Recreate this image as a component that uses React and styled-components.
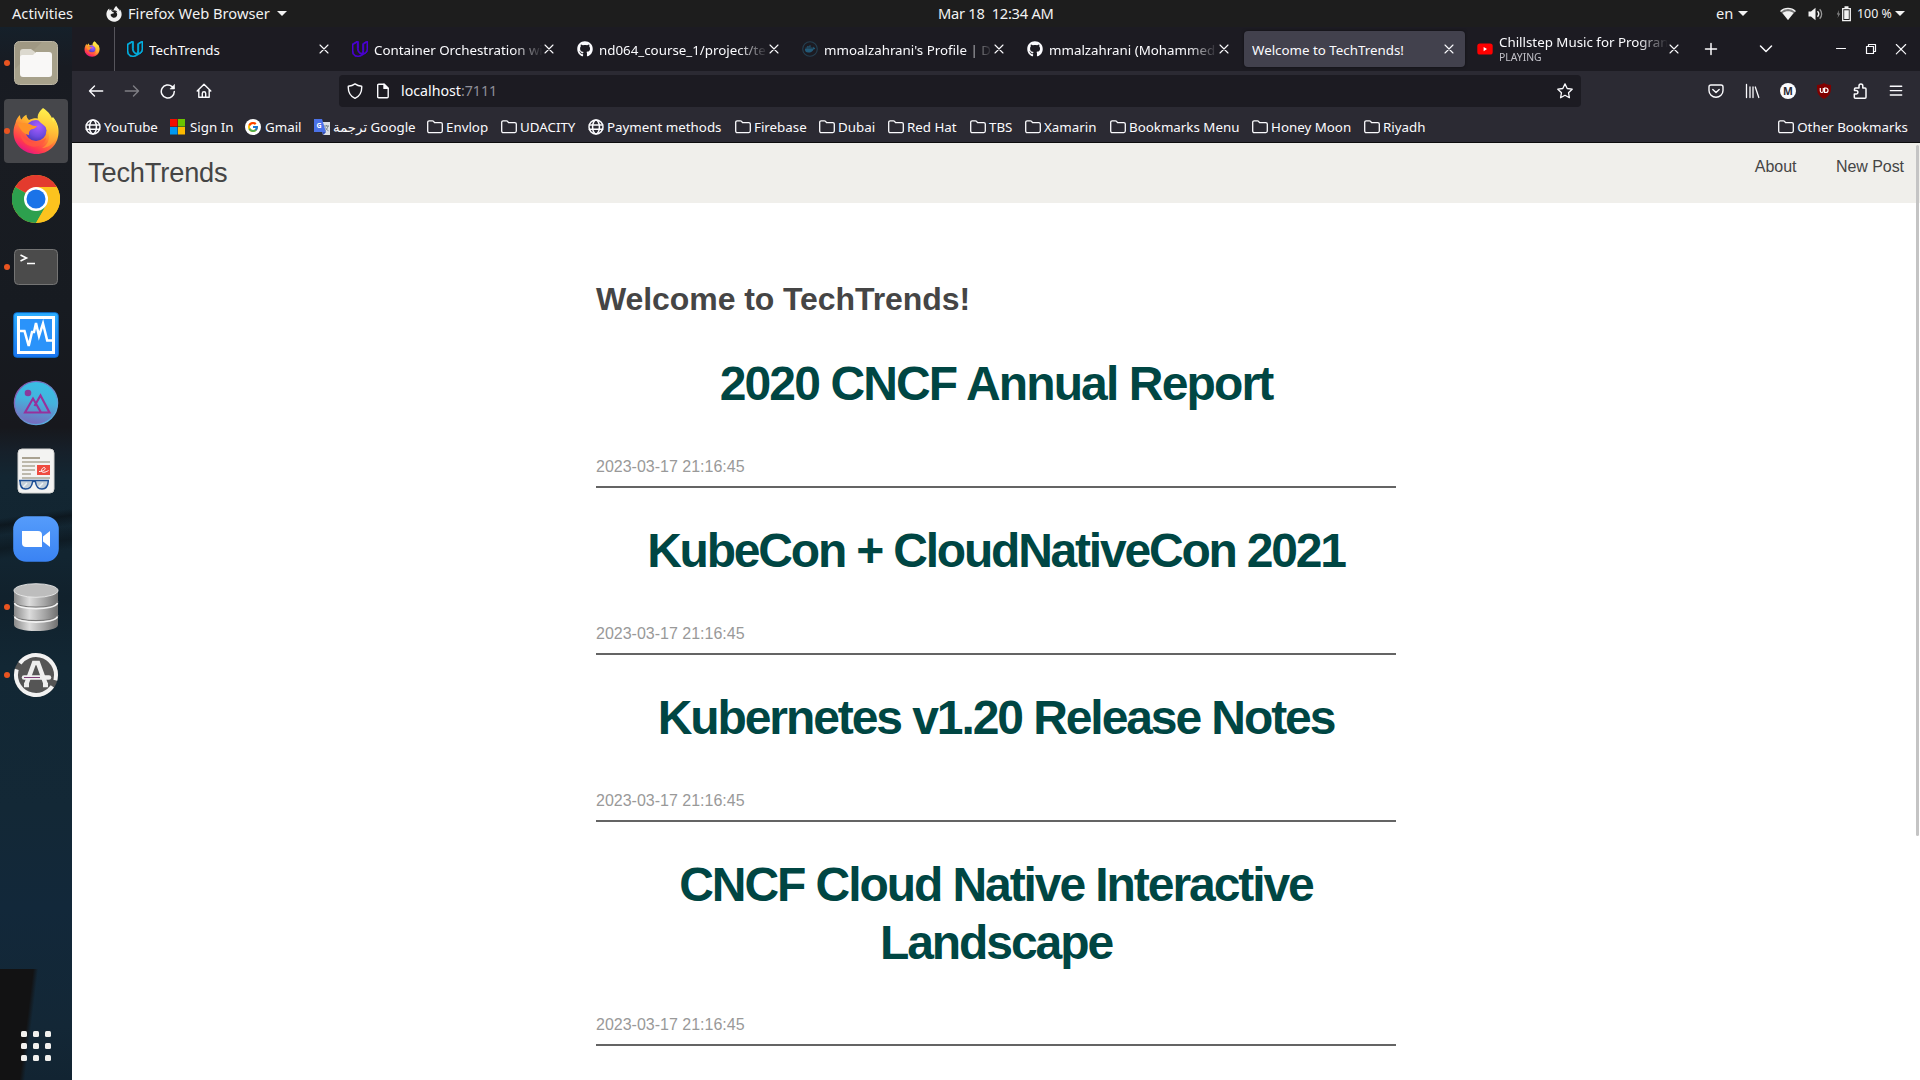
import React from "react";
import styled, { createGlobalStyle, css } from "styled-components";
import { FaDocker, FaFirefoxBrowser, FaGithub } from "react-icons/fa";
import { SiUdacity } from "react-icons/si";
import { FcGoogle } from "react-icons/fc";

const GlobalStyle = createGlobalStyle`
  * { box-sizing: border-box; }
  body { margin: 0; background: #fff; overflow: hidden; }
  h1, h2, p { margin: 0; font-weight: inherit; }
  svg { display: block; flex: none; }
`;

const uiFont = `"Noto Sans", "DejaVu Sans", sans-serif`;
const pageFont = `"Liberation Sans", Helvetica, Arial, sans-serif`;

/* ---------- desktop shell ---------- */

const Desktop = styled.div`
  width: 1920px;
  height: 1080px;
  display: flex;
  flex-direction: column;
  overflow: hidden;
  font-family: ${uiFont};
`;

const TopBar = styled.header`
  height: 27px;
  flex: none;
  display: grid;
  grid-template-columns: 938px 1fr auto;
  align-items: center;
  padding-right: 15px;
  background: #1d1d1d;
  color: #f2f2f2;
  font-size: 14.67px;
  line-height: 27px;
  white-space: pre;
`;

const BarGroup = styled.div`
  display: flex;
  align-items: center;
  padding-left: ${(p) => p.$start || 0}px;
`;

const BarItem = styled.span`
  display: flex;
  align-items: center;
  width: ${(p) => (p.$w ? `${p.$w}px` : "auto")};
  font-size: ${(p) => p.$size || 14.67}px;
`;

const Clock = styled.time`
  letter-spacing: -0.26px;
`;

const Caret = styled.i`
  width: 10px;
  height: 5px;
  background: #f2f2f2;
  clip-path: polygon(0 0, 100% 0, 50% 100%);
`;

const Work = styled.div`
  flex: 1;
  display: flex;
  min-height: 0;
`;

const Dock = styled.nav`
  width: 72px;
  flex: none;
  display: flex;
  flex-direction: column;
  align-items: center;
  gap: 4px;
  padding: 4px 0 2px;
  background:
    linear-gradient(97deg, #121213 0 33px, transparent 38px) 0 942px / 45px 111px no-repeat,
    linear-gradient(172deg, transparent 0 42%, rgba(8, 12, 16, 0.55) 46%, transparent 52%, rgba(8, 12, 16, 0.4) 60%, transparent 66%) 0 420px / 72px 160px no-repeat,
    linear-gradient(#15202a 0, #181b22 40px, #191c22 120px, #171b21 280px, #17181d 400px, #16202a 425px, #132632 450px, #122531 530px, #11212c 570px, #122734 640px, #132836 780px, #12283a 880px, #132736 1000px, #122432 1053px);
`;

const DockItem = styled.button`
  position: relative;
  width: 64px;
  height: 64px;
  flex: none;
  display: grid;
  place-items: center;
  padding: 0;
  border: 0;
  border-radius: 4px;
  background: ${(p) => (p.$active ? "#46474b" : "transparent")};
  ${(p) =>
    p.$running &&
    css`
      &::before {
        content: "";
        position: absolute;
        left: 0;
        top: 29px;
        width: 6px;
        height: 6px;
        border-radius: 50%;
        background: #e95420;
      }
    `}
`;

const AppGrid = styled.button`
  display: grid;
  grid-template-columns: repeat(3, 6px);
  gap: 6px;
  margin: auto 0 17px;
  padding: 0;
  border: 0;
  background: none;
`;

const GridDot = styled.i`
  width: 6px;
  height: 6px;
  border-radius: 1.5px;
  background: #f1f0ee;
`;

/* ---------- browser ---------- */

const Browser = styled.main`
  flex: 1;
  min-width: 0;
  display: flex;
  flex-direction: column;
`;

const TabStrip = styled.div`
  height: 44px;
  flex: none;
  display: flex;
  background: #1c1b22;
  color: #fbfbfe;
`;

const PinnedTab = styled.div`
  width: 43px;
  display: flex;
  align-items: center;
  padding: 0 0 0 12px;
  border-right: 1px solid #56555c;
`;

const Tabs = styled.div`
  display: flex;
  gap: 4px;
  padding: 4px 0 0 4px;
`;

const Tab = styled.div`
  width: 221px;
  height: 36px;
  display: flex;
  align-items: center;
  gap: 6px;
  padding: 0 8px;
  border-radius: 4px;
  background: ${(p) => (p.$active ? "#42414d" : "transparent")};
  box-shadow: ${(p) => (p.$active ? "0 0 3px rgba(0,0,0,.5)" : "none")};
`;

const TabText = styled.div`
  flex: 1;
  min-width: 0;
  overflow: hidden;
  white-space: nowrap;
  font-size: 13.33px;
  line-height: 18px;
  padding-top: ${(p) => (p.$double ? 0 : 2)}px;
  margin-top: ${(p) => (p.$double ? -2 : 0)}px;
  margin-right: -8px;
  ${(p) =>
    p.$fade &&
    css`
      mask-image: linear-gradient(to left, transparent 0, black 30px);
    `}
`;

const TabStatus = styled.small`
  display: block;
  padding-top: 1px;
  font-size: 10.4px;
  line-height: 11px;
  color: #c2c1c8;
`;

const StripButton = styled.div`
  width: ${(p) => p.$w}px;
  display: grid;
  place-items: center;
`;

const WindowButtons = styled.div`
  margin-left: auto;
  display: flex;
  padding-right: 4px;
`;

const NavBar = styled.div`
  height: 40px;
  flex: none;
  display: flex;
  align-items: center;
  padding: 0 6px;
  background: #2b2a33;
  color: #fbfbfe;
`;

const ToolButton = styled.div`
  width: 36px;
  height: 36px;
  display: grid;
  place-items: center;
  opacity: ${(p) => (p.$off ? 0.4 : 1)};
`;

const UrlBar = styled.div`
  width: 1242px;
  height: 32px;
  margin-left: 117px;
  display: flex;
  align-items: center;
  gap: 12px;
  padding: 0 8px;
  border-radius: 4px;
  background: #1c1b22;
`;

const UrlText = styled.span`
  flex: 1;
  margin-left: -2px;
  font-size: 14.2px;
  line-height: 20px;
`;

const Dim = styled.span`
  color: #8f8f98;
`;

const Tools = styled.div`
  display: flex;
  margin-left: auto;
`;

const Bookmarks = styled.div`
  height: 32px;
  flex: none;
  display: flex;
  align-items: center;
  padding: 1px 12px 0 13px;
  background: #2b2a33;
  border-bottom: 1px solid #0c0c0d;
  color: #fbfbfe;
  font-size: 13.33px;
`;

const Bookmark = styled.div`
  width: ${(p) => (p.$w ? `${p.$w}px` : "auto")};
  margin-left: ${(p) => (p.$last ? "auto" : 0)};
  display: flex;
  align-items: center;
  gap: ${(p) => p.$gap || 3}px;
  white-space: nowrap;
`;

/* ---------- web page ---------- */

const Page = styled.div`
  position: relative;
  flex: 1;
  min-height: 0;
  overflow: hidden;
  background: #fff;
  color: #454545;
  font-family: ${pageFont};
`;

const ScrollThumb = styled.div`
  position: absolute;
  right: 1px;
  top: 2px;
  width: 3px;
  height: 691px;
  border-radius: 2px;
  background: #c4c4c4;
`;

const SiteHeader = styled.div`
  height: 60px;
  display: flex;
  justify-content: space-between;
  padding: 0 16px;
  background: #f0efeb;
`;

const Brand = styled.div`
  font-size: 27.2px;
  line-height: 59px;
  letter-spacing: -0.15px;
`;

const SiteNav = styled.div`
  display: flex;
  gap: 39.5px;
  font-size: 16px;
  line-height: 47px;
  letter-spacing: -0.05px;
`;

const Content = styled.section`
  width: 800px;
  margin: 0 auto;
  padding-top: 76px;
`;

const Welcome = styled.h2`
  margin-bottom: 1.1px;
  font-size: 32px;
  line-height: 41px;
  font-weight: 700;
  letter-spacing: -0.08px;
`;

const Post = styled.article`
  padding: 34.4px 0 6.3px;
  border-bottom: 2px solid #646464;
`;

const PostTitle = styled.h1`
  font-size: 48px;
  line-height: 57.6px;
  font-weight: 700;
  letter-spacing: ${(p) => p.$tracking}px;
  text-align: center;
  color: #004643;
`;

const PostDate = styled.p`
  margin-top: 41px;
  font-size: 16px;
  line-height: 25.6px;
  color: #999;
`;

/* ---------- icons ---------- */

const Line = ({ size = 16, w = 1.3, children }) => (
  <svg width={size} height={size} viewBox="0 0 16 16" fill="none" stroke="currentColor" strokeWidth={w} strokeLinecap="round" strokeLinejoin="round">
    {children}
  </svg>
);

const Cross = () => <Line w={1.1}><path d="M4 4l8 8M12 4l-8 8" /></Line>;
const Folder = () => <Line><path d="M.7 3.300c0-.9.6-1.500 1.500-1.500h3.200c.5 0 .9.2 1.200.6l.9 1.200h6.300c.9 0 1.500.6 1.500 1.500v7c0 .9-.6 1.500-1.500 1.500H2.200c-.9 0-1.500-.6-1.500-1.500z" /></Line>;
const Globe = () => <Line w={1.5}><circle cx="8" cy="8" r="7" /><ellipse cx="8" cy="8" rx="3.4" ry="7" /><path d="M1.300 6h13.400M1.300 10.300h13.400" /></Line>;
const Udacity = ({ color }) => <SiUdacity size={16} color={color} stroke={color} strokeWidth="1.2" />;

const Firefox = ({ size, id }) => (
  <svg width={size} height={size} viewBox="0 0 48 48">
    <defs>
      <linearGradient id={`${id}a`} x1=".8" y1=".1" x2=".25" y2=".95">
        <stop offset="0" stopColor="#fff44f" /><stop offset=".3" stopColor="#ffb52e" /><stop offset=".55" stopColor="#ff7139" /><stop offset=".8" stopColor="#ff3750" /><stop offset="1" stopColor="#e31587" />
      </linearGradient>
      <radialGradient id={`${id}b`} cx=".6" cy=".3" r=".8">
        <stop offset="0" stopColor="#a95dff" /><stop offset=".6" stopColor="#6f4be0" /><stop offset="1" stopColor="#4434b0" />
      </radialGradient>
      <linearGradient id={`${id}c`} x1=".6" y1="0" x2=".5" y2="1">
        <stop offset="0" stopColor="#fff44f" /><stop offset=".5" stopColor="#ffc938" /><stop offset="1" stopColor="#ff8a33" />
      </linearGradient>
    </defs>
    <path fill={`url(#${id}a)`} d="M3.500 16c.5-3 2-6 4.500-8 0 2 .5 3.500 1.500 4.500C11 10 12.500 8.500 14.500 7.800c0 2 .8 3.700 2.500 5.200C21 11 25 11 28 12l9 1c2-.5 3-2 4-3 4 5 6 10 5.500 16C46 38 36.500 47 24.500 47S1.500 38 1.500 25.500c0-3.500.7-6.500 2-9.500z" />
    <circle cx="24" cy="23.500" r="10.500" fill={`url(#${id}b)`} />
    <path fill={`url(#${id}c)`} d="M31 1c6 4 9.500 9 10 14 .7-1 1-2 1-3.500C46 18 46.500 25 44 31c-2.500 6-7.500 9.500-14 10 6-3 8-9 6.500-15-1-5-4-7.500-7.500-10-4.500-3.500-5-9 2-15z" />
    <path fill="#ff9328" d="M6 17c5-1.800 11-1.300 14.500 1.500 1.500.4 3 .5 4.500.5-1 2-3 3-5.500 3.300-2 1.200-3 3-2.500 5.700-5-1-9-5-11-11z" />
    <path fill="#ff5a3f" opacity=".75" d="M8 23c2 9 9 14 17 12 4-1 6-2 9-4-1 6-7 9.500-14 8.500C13 38.500 7.500 32 8 23z" />
  </svg>
);

const Files = () => (
  <svg width="48" height="48" viewBox="0 0 48 48">
    <rect x="2.500" y="2.500" width="43" height="43" rx="5" fill="#9f9883" stroke="#bdb7a6" />
    <path d="M3 45V30L30 3h12q3 0 3 3v36q0 3-3 3z" fill="#b0a994" opacity=".5" />
    <path d="M8 23V13q0-3 3-3h8l4 3v8z" fill="#dcd9cf" />
    <path d="M8 18.500q0-2.500 2.500-2.500H21l3-3h13q3 0 3 3v19q0 3-3 3H11q-3 0-3-3z" fill="#f9f8f7" />
  </svg>
);

const Chrome = () => (
  <svg width="48" height="48" viewBox="0 0 48 48">
    <circle cx="24" cy="24" r="24" fill="#fcc31e" />
    <path d="M24 24L3.200 12A24 24 0 0 1 44.800 12z" fill="#e33b2e" />
    <path d="M24 24L3.200 12A24 24 0 0 0 24 48l10.400-18z" fill="#2da04e" />
    <path d="M24 12h20.800A24 24 0 0 1 24 48l10.400-18z" fill="#fcc31e" />
    <circle cx="24" cy="24" r="12" fill="#fff" />
    <circle cx="24" cy="24" r="9.500" fill="#1a73e8" />
  </svg>
);

const Terminal = () => (
  <svg width="48" height="48" viewBox="0 0 48 48">
    <rect x="2.500" y="6.500" width="43" height="35" rx="4" fill="#4b4b4b" stroke="#747474" />
    <path d="M8.500 12l6 3-6 3M15 20.500h8" stroke="#fff" strokeWidth="1.600" fill="none" />
  </svg>
);

const Monitor = () => (
  <svg width="48" height="48" viewBox="0 0 48 48">
    <defs><linearGradient id="mon" x1="0" y1="0" x2="0" y2="1"><stop offset="0" stopColor="#2eb0ff" /><stop offset="1" stopColor="#1a74f0" /></linearGradient></defs>
    <rect x="1.700" y="1.700" width="44.600" height="44.600" rx="3" fill="url(#mon)" stroke="#0c6fd0" />
    <rect x="6.500" y="6.500" width="35" height="35" fill="#2a93fa" stroke="#fff" strokeWidth="3" />
    <path d="M8 20h4.500l4.200 15L20 21h2l2-9 3 13 4-12.500 4.200 17H41" stroke="#fff" strokeWidth="2.500" fill="none" />
  </svg>
);

const Mountains = () => (
  <svg width="48" height="48" viewBox="0 0 48 48">
    <defs>
      <linearGradient id="mtn" x1=".6" y1="0" x2=".4" y2="1"><stop offset="0" stopColor="#38bfe6" /><stop offset=".45" stopColor="#45b2dc" /><stop offset="1" stopColor="#7a68bd" /></linearGradient>
      <linearGradient id="mtr" x1="0" y1="0" x2="1" y2="1"><stop offset="0" stopColor="#8d4aa8" /><stop offset="1" stopColor="#4ec0e8" /></linearGradient>
    </defs>
    <circle cx="24" cy="24" r="21.600" fill="url(#mtn)" stroke="url(#mtr)" strokeWidth="1.300" />
    <circle cx="16" cy="14" r="3.300" fill="#8a3b9c" />
    <path d="M13 33.500l8-14 8 14zM22.500 27l6-10.500 9 17H29" fill="none" stroke="#97309c" strokeWidth="2.100" />
  </svg>
);

const Reader = () => (
  <svg width="48" height="48" viewBox="0 0 48 48">
    <rect x="6" y="2" width="36" height="44" rx="4" fill="#f3f3f2" stroke="#d5d5d3" />
    <path d="M10 11h18" stroke="#a9a292" strokeWidth="2" />
    <path d="M10 15h28M10 19h13M10 23h13M10 27h9M10 31h28" stroke="#bdb9ac" strokeWidth="1.800" />
    <rect x="25" y="18" width="13" height="10" fill="#ef4b3f" />
    <path d="M27 24.500c4 0 7-2 6-3.500s-4 1-3.500 3 4 1.500 7-.5" stroke="#fff" fill="none" />
    <path d="M7 33.500h30M8 34c0 5 1 8 5.500 8S20 39 20.500 35c1-1 2-1 3 0 .5 4 2 7 6.500 7s6-3 6.300-8" fill="#c3ced8" stroke="#1d4f96" strokeWidth="1.500" />
    <path d="M11 40l4-4M27 40l4-4" stroke="#eef3f6" strokeWidth="1.500" />
  </svg>
);

const Zoom = () => (
  <svg width="48" height="48" viewBox="0 0 48 48">
    <defs><linearGradient id="zm" x1="0" y1="0" x2="0" y2="1"><stop offset="0" stopColor="#559cfb" /><stop offset="1" stopColor="#3a83f3" /></linearGradient></defs>
    <rect x="1.200" y="1.200" width="45.600" height="45.600" rx="13" fill="url(#zm)" />
    <path d="M10 16h16q4 0 4 4v12H14q-4 0-4-4z" fill="#fff" />
    <path d="M31 21.500l7-5.500v16l-7-5.500z" fill="#fff" />
  </svg>
);

const Database = () => (
  <svg width="48" height="50" viewBox="0 0 48 50">
    <defs>
      <linearGradient id="db" x1="0" x2="1"><stop offset="0" stopColor="#8a8a8a" /><stop offset=".35" stopColor="#dcdcdc" /><stop offset=".7" stopColor="#a4a4a4" /><stop offset="1" stopColor="#707070" /></linearGradient>
    </defs>
    <path d="M2 8v35c1 8 43 8 44 0V8z" fill="url(#db)" />
    {[20, 33.5].map((y) => (
      <g key={y} fill="none" transform={`translate(0 ${y})`}>
        <path d="M2-.5c1 7.500 43 7.500 44 0" stroke="#777" strokeWidth="1.200" />
        <path d="M2.500 1c2 7.500 41 7.500 43 0" stroke="#f2f2f2" strokeWidth="1.600" />
      </g>
    ))}
    <ellipse cx="24" cy="8.500" rx="22" ry="6.800" fill="#bdbdbd" stroke="#e9e9e9" strokeWidth=".9" />
  </svg>
);

const Updater = () => (
  <svg width="48" height="48" viewBox="0 0 48 48">
    <circle cx="24" cy="24" r="22" fill="#555" />
    <circle cx="24" cy="24" r="20" fill="none" stroke="#f2f2f2" strokeWidth="4" strokeDasharray="56 6.800" strokeDashoffset="-8" transform="rotate(12 24 24)" />
    <path d="M14 34l8-22h4l8 22M12 34h5M31 34h5" fill="none" stroke="#eee" strokeWidth="4.500" />
    <path d="M12 26.500h25" stroke="#eee" strokeWidth="4.500" strokeLinecap="round" />
    <path d="M12 26.500h16" stroke="#7e3d77" strokeWidth="1" />
  </svg>
);

const MicrosoftMark = () => (
  <svg width="16" height="16" viewBox="0 0 16 16">
    <path fill="#f10e00" d="M0 0h7.500v7.500H0z" /><path fill="#6bc200" d="M8 0h7v7.500H8z" />
    <path fill="#0098f0" d="M0 8h7.500v7.500H0z" /><path fill="#fcb900" d="M8 8h7v7.500H8z" />
  </svg>
);

const GoogleMark = () => (
  <svg width="16" height="16" viewBox="0 0 16 16">
    <circle cx="8" cy="8" r="8" fill="#fff" />
    <FcGoogle x="2" y="2" size={12} />
  </svg>
);

const GlyphText = styled.text`
  font-family: ${uiFont};
  font-size: ${(p) => p.$size}px;
  font-weight: 700;
  text-anchor: middle;
`;

const TranslateMark = () => (
  <svg width="16" height="16" viewBox="0 0 16 16">
    <path fill="#dcdfe3" d="M6 3h10v13H9z" />
    <path fill="#4b72e8" d="M0 0h8l4 13H0z" />
    <path fill="#3450b8" d="M8 13h4l-2.500 3z" />
    <GlyphText x="5" y="8.800" fill="#fff" $size={7}>G</GlyphText>
    <path d="M10 7h5M12.500 6v1M14 7c-.4 2-1.500 3.500-2.700 4.500M11.500 8.500c.5 1.500 1.500 2.500 3 3.300" stroke="#76838c" fill="none" />
  </svg>
);

const YouTubeMark = () => (
  <svg width="16" height="16" viewBox="0 0 16 16">
    <rect x=".3" y="2.500" width="15.400" height="11" rx="2.600" fill="#f00" />
    <path d="M6.600 6v4.200L10 8.100z" fill="#fff" />
  </svg>
);

const DockerMark = () => (
  <svg width="16" height="16" viewBox="0 0 16 16">
    <circle cx="8" cy="8" r="7.300" fill="none" stroke="#243f50" strokeWidth="1.100" />
    <FaDocker x="2.800" y="2.600" size={10.5} color="#225a78" />
  </svg>
);

const Wifi = () => (
  <svg width="16" height="14" viewBox="0 0 16 14">
    <path d="M.7 4.600C4.800.3 11.200.3 15.300 4.600L8 13z" fill="#777" />
    <path d="M2.500 6C5.500 3.600 10.500 3.600 13.500 6L8 13z" fill="#f2f2f2" />
    <path d="M.5 4.500C4.800.4 11.200.4 15.500 4.500" fill="none" stroke="#f2f2f2" strokeWidth="1.300" />
  </svg>
);

const Volume = () => (
  <svg width="16" height="14" viewBox="0 0 16 14">
    <path d="M.5 4.500H3L7.500.8v12.400L3 9.500H.5z" fill="#f2f2f2" />
    <path d="M9.500 4.300c1.400 1.500 1.400 3.900 0 5.400" fill="none" stroke="#f2f2f2" strokeWidth="1.400" />
    <path d="M11.700 2.300c2.600 2.600 2.600 6.800 0 9.400" fill="none" stroke="#999" strokeWidth="1.300" />
  </svg>
);

const Battery = () => (
  <svg width="16" height="16" viewBox="0 0 16 16">
    <path d="M3 4L.8 8.500h1.600L1.500 12 4.300 7.500H2.600z" fill="#8a8a8a" />
    <path d="M6.700 2.600h7.600v12H6.700z" fill="none" stroke="#f2f2f2" strokeWidth="1.300" />
    <path d="M8.500.3h4v2h-4zM8.200 4.200h4.600V13H8.200z" fill="#f2f2f2" />
  </svg>
);

const UBlock = () => (
  <svg width="16" height="16" viewBox="0 0 16 16">
    <path d="M8 0c2.500 1.500 4.600 1.900 7 1.900 0 6.600.2 10-7 14.100C.8 11.900 1 8.500 1 1.900 3.400 1.900 5.500 1.500 8 0z" fill="#800000" />
    <path d="M4.300 5v3a1.500 1.500 0 0 0 3 0V5M8.600 5v4.500h1.200a2.200 2.200 0 0 0 0-4.500z" fill="none" stroke="#fff" strokeWidth="1.200" />
  </svg>
);

const Account = () => (
  <svg width="16" height="16" viewBox="0 0 16 16">
    <circle cx="8" cy="8" r="8" fill="#fbfbfe" />
    <GlyphText x="8" y="11.700" fill="#2b2a33" $size={10.5}>M</GlyphText>
  </svg>
);

/* ---------- data ---------- */

const dockApps = [
  { icon: <Files />, running: true },
  { icon: <Firefox size={48} id="dock" />, running: true, active: true },
  { icon: <Chrome /> },
  { icon: <Terminal />, running: true },
  { icon: <Monitor /> },
  { icon: <Mountains /> },
  { icon: <Reader /> },
  { icon: <Zoom /> },
  { icon: <Database />, running: true },
  { icon: <Updater />, running: true },
];

const tabs = [
  { icon: <Udacity color="#02b3e4" />, title: "TechTrends" },
  { icon: <Udacity color="#4b00d8" />, title: "Container Orchestration wi", fade: true },
  { icon: <FaGithub size={16} />, title: "nd064_course_1/project/te", fade: true },
  { icon: <DockerMark />, title: "mmoalzahrani's Profile | D", fade: true },
  { icon: <FaGithub size={16} />, title: "mmalzahrani (Mohammed", fade: true },
  { title: "Welcome to TechTrends!", active: true },
  { icon: <YouTubeMark />, title: "Chillstep Music for Progran", status: "PLAYING", fade: true },
];

const bookmarks = [
  { icon: <Globe />, label: "YouTube", w: 85 },
  { icon: <MicrosoftMark />, label: "Sign In", w: 75, gap: 4 },
  { icon: <GoogleMark />, label: "Gmail", w: 69, gap: 4 },
  { icon: <TranslateMark />, label: "ترجمة Google", w: 113 },
  { label: "Envlop", w: 74 },
  { label: "UDACITY", w: 87 },
  { icon: <Globe />, label: "Payment methods", w: 147 },
  { label: "Firebase", w: 84 },
  { label: "Dubai", w: 69 },
  { label: "Red Hat", w: 82 },
  { label: "TBS", w: 55 },
  { label: "Xamarin", w: 85 },
  { label: "Bookmarks Menu", w: 142 },
  { label: "Honey Moon", w: 112 },
  { label: "Riyadh" },
  { label: "Other Bookmarks", last: true },
];

const posts = [
  { title: "2020 CNCF Annual Report", tracking: -1.87 },
  { title: "KubeCon + CloudNativeCon 2021", tracking: -2.2 },
  { title: "Kubernetes v1.20 Release Notes", tracking: -2.08 },
  { title: "CNCF Cloud Native Interactive Landscape", tracking: -2.07 },
];

export default function App() {
  return (
    <Desktop>
      <GlobalStyle />
      <TopBar>
        <BarGroup $start={12}>
          <BarItem $w={94}>Activities</BarItem>
          <BarItem $w={22}><FaFirefoxBrowser size={16} /></BarItem>
          <BarItem $w={149}>Firefox Web Browser</BarItem>
          <Caret />
        </BarGroup>
        <BarGroup><Clock>Mar 18  12:34 AM</Clock></BarGroup>
        <BarGroup>
          <BarItem $w={22}>en</BarItem>
          <BarItem $w={42}><Caret /></BarItem>
          <BarItem $w={28}><Wifi /></BarItem>
          <BarItem $w={28}><Volume /></BarItem>
          <BarItem $w={21}><Battery /></BarItem>
          <BarItem $w={38} $size={12.4}>100 %</BarItem>
          <Caret />
        </BarGroup>
      </TopBar>
      <Work>
        <Dock>
          {dockApps.map((a, i) => (
            <DockItem key={i} $running={a.running} $active={a.active}>{a.icon}</DockItem>
          ))}
          <AppGrid>
            {Array.from({ length: 9 }, (_, i) => <GridDot key={i} />)}
          </AppGrid>
        </Dock>
        <Browser>
          <TabStrip>
            <PinnedTab><Firefox size={16} id="pin" /></PinnedTab>
            <Tabs>
              {tabs.map((t) => (
                <Tab key={t.title} $active={t.active}>
                  {t.icon}
                  <TabText $fade={t.fade} $double={t.status}>
                    {t.title}
                    {t.status && <TabStatus>{t.status}</TabStatus>}
                  </TabText>
                  <Cross />
                </Tab>
              ))}
            </Tabs>
            <StripButton $w={42}><Line w={1.5}><path d="M8 2.500v11M2.500 8h11" /></Line></StripButton>
            <StripButton $w={67}><Line w={1.5}><path d="M2.500 5L8 10.500 13.500 5" /></Line></StripButton>
            <WindowButtons>
              <StripButton $w={30}><Line w={1.1}><path d="M3.500 7.500h9" /></Line></StripButton>
              <StripButton $w={30}><Line w={1.2}><path d="M3.500 5.500h7v7h-7zM5.500 5V3.500h7v7H11" /></Line></StripButton>
              <StripButton $w={30}><Line w={1.1}><path d="M3.300 3.500l9.400 9.400M12.700 3.500l-9.400 9.400" /></Line></StripButton>
            </WindowButtons>
          </TabStrip>
          <NavBar>
            <ToolButton><Line w={1.4}><path d="M14.700 8H1.500M6.500 3l-5 5 5 5" /></Line></ToolButton>
            <ToolButton $off><Line w={1.4}><path d="M1.300 8h13.200M9.500 3l5 5-5 5" /></Line></ToolButton>
            <ToolButton><Line w={1.5}><path d="M14.300 8.500a6.500 6.500 0 1 1-2.200-4.900l1.400 1.300" /><path d="M14.500 1.800v4.200h-4.200z" fill="currentColor" strokeWidth=".6" /></Line></ToolButton>
            <ToolButton><Line w={1.4}><path d="M1.200 8L8 1.200 14.800 8M2.800 6.800v7.400h10.400V6.800M6.300 14V10.500a1.700 1.700 0 0 1 3.400 0V14" /></Line></ToolButton>
            <UrlBar>
              <Line w={1.4}><path d="M8 .9c2 1.500 4.300 2.200 6.700 2.400.3 5-1.200 9.500-6.700 12C2.500 12.800 1 8.300 1.300 3.300 3.700 3.100 6 2.400 8 .9z" /></Line>
              <Line w={1.4}>
                <path d="M3.700 1.200h5.500l4 4v8.600q0 1-1 1H3.700q-1 0-1-1V2.200q0-1 1-1z" />
                <path d="M9 1.200v4.200h4.200z" fill="currentColor" />
              </Line>
              <UrlText>localhost<Dim>:7111</Dim></UrlText>
              <Line w={1.3}><path d="M8 .9l2.200 4.600 5 .7-3.700 3.500.9 5L8 12.300l-4.400 2.400.9-5L.8 6.200l5-.7z" /></Line>
            </UrlBar>
            <Tools>
              <ToolButton><Line w={1.4}><path d="M3 2h10q2 0 2 2v3.500a7 6.800 0 0 1-14 0V4q0-2 2-2zM4.800 6.500L8 9.500l3.200-3" /></Line></ToolButton>
              <ToolButton><Line w={1.3}><path d="M2.500 1.500v13M6 4v10.500M9 4v10.500M11.300 4l3.500 10.500" /></Line></ToolButton>
              <ToolButton><Account /></ToolButton>
              <ToolButton><UBlock /></ToolButton>
              <ToolButton><Line w={1.5}><path d="M5 15.200h8q1 0 1-1V6q0-1-1-1h-2.200V3a1.900 1.900 0 0 0-3.800 0v2H3.500q-1 0-1 1v1.500h1.600a1.700 1.700 0 0 1 0 3.600H2.300v3.100q0 1 1 1z" /></Line></ToolButton>
              <ToolButton><Line w={1.4}><path d="M2.300 3.200h11.400M2.300 7.600h11.400M2.300 12h11.400" /></Line></ToolButton>
            </Tools>
          </NavBar>
          <Bookmarks>
            {bookmarks.map((b) => (
              <Bookmark key={b.label} $w={b.w} $gap={b.gap} $last={b.last}>
                {b.icon || <Folder />}
                <span>{b.label}</span>
              </Bookmark>
            ))}
          </Bookmarks>
          <Page>
            <SiteHeader>
              <Brand>TechTrends</Brand>
              <SiteNav><span>About</span><span>New Post</span></SiteNav>
            </SiteHeader>
            <Content>
              <Welcome>Welcome to TechTrends!</Welcome>
              {posts.map((p) => (
                <Post key={p.title}>
                  <PostTitle $tracking={p.tracking}>{p.title}</PostTitle>
                  <PostDate>2023-03-17 21:16:45</PostDate>
                </Post>
              ))}
            </Content>
            <ScrollThumb />
          </Page>
        </Browser>
      </Work>
    </Desktop>
  );
}
